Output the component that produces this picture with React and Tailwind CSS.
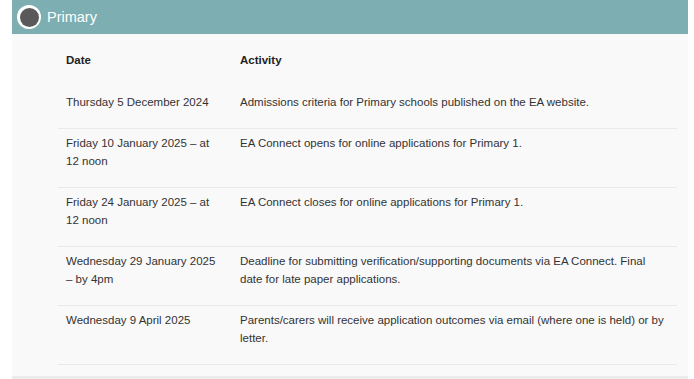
const rows = [
  ['Thursday 5 December 2024', 'Admissions criteria for Primary schools published on the EA website.'],
  ['Friday 10 January 2025 – at 12 noon', 'EA Connect opens for online applications for Primary 1.'],
  ['Friday 24 January 2025 – at 12 noon', 'EA Connect closes for online applications for Primary 1.'],
  ['Wednesday 29 January 2025 – by 4pm', 'Deadline for submitting verification/supporting documents via EA Connect. Final date for late paper applications.'],
  ['Wednesday 9 April 2025', 'Parents/carers will receive application outcomes via email (where one is held) or by letter.'],
]

export default function App() {
  return (
    <div className="w-full h-[379px] bg-white pl-[12px] pr-[6px] overflow-hidden font-['Liberation_Sans',Arial,sans-serif]">
      {/* Header */}
      <div className="h-[34px] bg-[#7daeb1] flex items-center pl-[5px] gap-[6px]">
        <div className="w-[24px] h-[24px] rounded-full bg-white flex items-center justify-center">
          <div className="w-[19px] h-[19px] rounded-full bg-[#595959]" />
        </div>
        <span className="text-white text-[14.5px] leading-none">Primary</span>
      </div>

      {/* Body */}
      <div className="bg-[#f9f9f9] pt-[12px] pb-[11px] pl-[46px] pr-[11px] border-b-4 border-[#ececec]">
        <table className="w-full table-fixed border-collapse text-[11.5px] leading-[18px] text-[#333]">
          <colgroup>
            <col className="w-[174px]" />
            <col />
          </colgroup>
          <thead>
            <tr>
              <th className="text-left font-bold text-[#222] px-[8px] pt-[5px] pb-[19px]">Date</th>
              <th className="text-left font-bold text-[#222] px-[8px] pt-[5px] pb-[19px]">Activity</th>
            </tr>
          </thead>
          <tbody>
            {rows.map(([date, activity]) => (
              <tr key={date} className="border-b border-[#e9e9e9]">
                <td className="align-top px-[8px] pt-[5px] pb-[17px]">{date}</td>
                <td className="align-top px-[8px] pt-[5px] pb-[17px]">{activity}</td>
              </tr>
            ))}
          </tbody>
        </table>
      </div>
    </div>
  )
}
